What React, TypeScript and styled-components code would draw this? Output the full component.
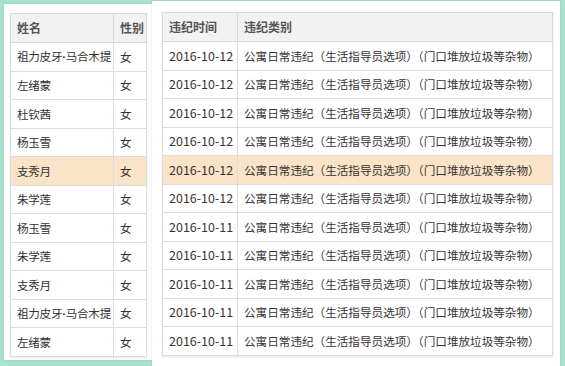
import React from 'react';
import styled, { createGlobalStyle } from 'styled-components';

const GlobalStyle = createGlobalStyle`
  html, body {
    margin: 0;
    padding: 0;
    background: #a9e2cf;
    overflow: hidden;
  }
  body {
    font-family: "Noto Sans CJK SC", "Noto Sans", sans-serif;
    color: #333;
  }
`;

const Stage = styled.div`
  display: flex;
  align-items: flex-start;
  width: 565px;
  height: 366px;
  padding-left: 4px;
  box-sizing: border-box;
`;

const Panel = styled.div<{ $top: number; $height: number }>`
  background: #fff;
  margin-top: ${({ $top }) => $top}px;
  height: ${({ $height }) => $height}px;
  box-sizing: border-box;
  box-shadow: 0 0 2px rgba(0, 0, 0, 0.12);
`;

const LeftPanel = styled(Panel)`
  width: 148px;
  padding: 9px 5px 0 6px;
`;

const RightPanel = styled(Panel)`
  width: 408px;
  padding: 11px 7px 0 10px;
`;

const Grid = styled.table`
  width: 100%;
  border-collapse: collapse;
  table-layout: fixed;
  font-size: 11.6px;
  line-height: 16px;
  box-shadow: 0 1px 2px rgba(0, 0, 0, 0.1);
`;

const HeadCell = styled.th<{ $w?: number }>`
  box-sizing: border-box;
  width: ${({ $w }) => ($w ? `${$w}px` : 'auto')};
  height: 29px;
  padding: 0 6px;
  text-align: left;
  font-size: 12px;
  font-weight: 600;
  color: #555;
  background: #f2f2f2;
  border: 1px solid #d9d9d9;
  white-space: nowrap;
`;

const Row = styled.tr<{ $active?: boolean }>`
  background: ${({ $active }) => ($active ? '#fae3c6' : '#fff')};
`;

const Cell = styled.td`
  box-sizing: border-box;
  height: 28.5px;
  padding: 0 6px;
  border: 1px solid #dcdcdc;
  white-space: nowrap;
  overflow: hidden;
  color: #333;
`;

const NameCell = styled(Cell)`
  padding-right: 2px;
  letter-spacing: -0.3px;
`;

const DateCell = styled(Cell)`
  font-size: 12.5px;
  color: #3b3530;
`;

const Dot = styled.span`
  font-family: "Liberation Sans", sans-serif;
  font-weight: 700;
`;

const people = [
  '祖力皮牙·马合木提',
  '左绪蒙',
  '杜钦茜',
  '杨玉雪',
  '支秀月',
  '朱学莲',
  '杨玉雪',
  '朱学莲',
  '支秀月',
  '祖力皮牙·马合木提',
  '左绪蒙',
];

const dates = [
  '2016-10-12',
  '2016-10-12',
  '2016-10-12',
  '2016-10-12',
  '2016-10-12',
  '2016-10-12',
  '2016-10-11',
  '2016-10-11',
  '2016-10-11',
  '2016-10-11',
  '2016-10-11',
];

const category = '公寓日常违纪（生活指导员选项）（门口堆放垃圾等杂物）';
const activeIndex = 4;

// the middle dot in transliterated names is narrow in the original font
const renderName = (name: string) => {
  const parts = name.split('·');
  if (parts.length < 2) return name;
  return (
    <>
      {parts[0]}
      <Dot>·</Dot>
      {parts[1]}
    </>
  );
};

const App: React.FC = () => {
  return (
    <>
      <GlobalStyle />
      <Stage>
        <LeftPanel $top={4} $height={356}>
          <Grid>
            <thead>
              <tr>
                <HeadCell $w={103}>姓名</HeadCell>
                <HeadCell>性别</HeadCell>
              </tr>
            </thead>
            <tbody>
              {people.map((name, i) => (
                <Row key={i} $active={i === activeIndex}>
                  <NameCell>{renderName(name)}</NameCell>
                  <Cell>女</Cell>
                </Row>
              ))}
            </tbody>
          </Grid>
        </LeftPanel>
        <RightPanel $top={1} $height={365}>
          <Grid>
            <thead>
              <tr>
                <HeadCell $w={75}>违纪时间</HeadCell>
                <HeadCell>违纪类别</HeadCell>
              </tr>
            </thead>
            <tbody>
              {dates.map((d, i) => (
                <Row key={i} $active={i === activeIndex}>
                  <DateCell>{d}</DateCell>
                  <Cell>{category}</Cell>
                </Row>
              ))}
            </tbody>
          </Grid>
        </RightPanel>
      </Stage>
    </>
  );
};

export default App;
